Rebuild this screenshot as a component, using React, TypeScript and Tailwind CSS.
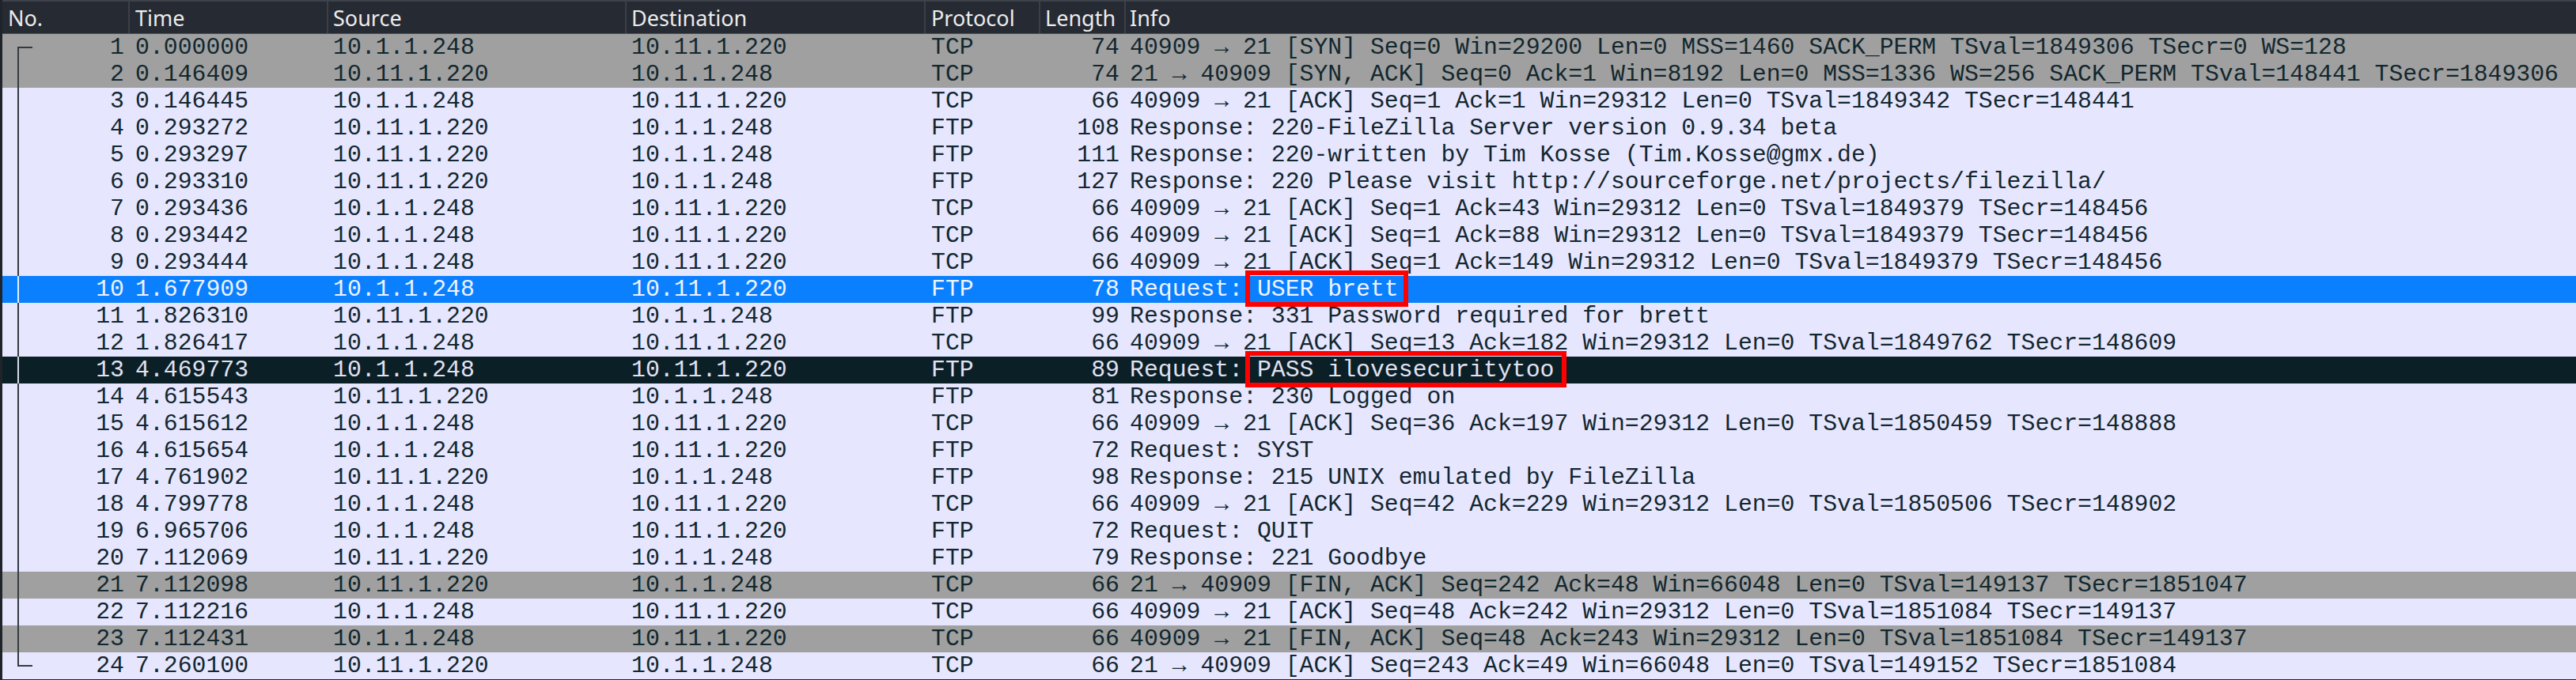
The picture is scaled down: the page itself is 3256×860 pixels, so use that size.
import React from "react";

type RowKind = "normal" | "syn" | "selected" | "marked";

interface Packet {
  no: number;
  time: string;
  src: string;
  dst: string;
  proto: string;
  len: number;
  info: string;
  kind?: RowKind;
  // part of info that gets the red box
  boxed?: string;
}

const A = "10.1.1.248";
const B = "10.11.1.220";

const packets: Packet[] = [
  { no: 1, time: "0.000000", src: A, dst: B, proto: "TCP", len: 74, info: "40909 → 21 [SYN] Seq=0 Win=29200 Len=0 MSS=1460 SACK_PERM TSval=1849306 TSecr=0 WS=128", kind: "syn" },
  { no: 2, time: "0.146409", src: B, dst: A, proto: "TCP", len: 74, info: "21 → 40909 [SYN, ACK] Seq=0 Ack=1 Win=8192 Len=0 MSS=1336 WS=256 SACK_PERM TSval=148441 TSecr=1849306", kind: "syn" },
  { no: 3, time: "0.146445", src: A, dst: B, proto: "TCP", len: 66, info: "40909 → 21 [ACK] Seq=1 Ack=1 Win=29312 Len=0 TSval=1849342 TSecr=148441" },
  { no: 4, time: "0.293272", src: B, dst: A, proto: "FTP", len: 108, info: "Response: 220-FileZilla Server version 0.9.34 beta" },
  { no: 5, time: "0.293297", src: B, dst: A, proto: "FTP", len: 111, info: "Response: 220-written by Tim Kosse (Tim.Kosse@gmx.de)" },
  { no: 6, time: "0.293310", src: B, dst: A, proto: "FTP", len: 127, info: "Response: 220 Please visit http://sourceforge.net/projects/filezilla/" },
  { no: 7, time: "0.293436", src: A, dst: B, proto: "TCP", len: 66, info: "40909 → 21 [ACK] Seq=1 Ack=43 Win=29312 Len=0 TSval=1849379 TSecr=148456" },
  { no: 8, time: "0.293442", src: A, dst: B, proto: "TCP", len: 66, info: "40909 → 21 [ACK] Seq=1 Ack=88 Win=29312 Len=0 TSval=1849379 TSecr=148456" },
  { no: 9, time: "0.293444", src: A, dst: B, proto: "TCP", len: 66, info: "40909 → 21 [ACK] Seq=1 Ack=149 Win=29312 Len=0 TSval=1849379 TSecr=148456" },
  { no: 10, time: "1.677909", src: A, dst: B, proto: "FTP", len: 78, info: "Request: ", boxed: "USER brett", kind: "selected" },
  { no: 11, time: "1.826310", src: B, dst: A, proto: "FTP", len: 99, info: "Response: 331 Password required for brett" },
  { no: 12, time: "1.826417", src: A, dst: B, proto: "TCP", len: 66, info: "40909 → 21 [ACK] Seq=13 Ack=182 Win=29312 Len=0 TSval=1849762 TSecr=148609" },
  { no: 13, time: "4.469773", src: A, dst: B, proto: "FTP", len: 89, info: "Request: ", boxed: "PASS ilovesecuritytoo", kind: "marked" },
  { no: 14, time: "4.615543", src: B, dst: A, proto: "FTP", len: 81, info: "Response: 230 Logged on" },
  { no: 15, time: "4.615612", src: A, dst: B, proto: "TCP", len: 66, info: "40909 → 21 [ACK] Seq=36 Ack=197 Win=29312 Len=0 TSval=1850459 TSecr=148888" },
  { no: 16, time: "4.615654", src: A, dst: B, proto: "FTP", len: 72, info: "Request: SYST" },
  { no: 17, time: "4.761902", src: B, dst: A, proto: "FTP", len: 98, info: "Response: 215 UNIX emulated by FileZilla" },
  { no: 18, time: "4.799778", src: A, dst: B, proto: "TCP", len: 66, info: "40909 → 21 [ACK] Seq=42 Ack=229 Win=29312 Len=0 TSval=1850506 TSecr=148902" },
  { no: 19, time: "6.965706", src: A, dst: B, proto: "FTP", len: 72, info: "Request: QUIT" },
  { no: 20, time: "7.112069", src: B, dst: A, proto: "FTP", len: 79, info: "Response: 221 Goodbye" },
  { no: 21, time: "7.112098", src: B, dst: A, proto: "TCP", len: 66, info: "21 → 40909 [FIN, ACK] Seq=242 Ack=48 Win=66048 Len=0 TSval=149137 TSecr=1851047", kind: "syn" },
  { no: 22, time: "7.112216", src: A, dst: B, proto: "TCP", len: 66, info: "40909 → 21 [ACK] Seq=48 Ack=242 Win=29312 Len=0 TSval=1851084 TSecr=149137" },
  { no: 23, time: "7.112431", src: A, dst: B, proto: "TCP", len: 66, info: "40909 → 21 [FIN, ACK] Seq=48 Ack=243 Win=29312 Len=0 TSval=1851084 TSecr=149137", kind: "syn" },
  { no: 24, time: "7.260100", src: B, dst: A, proto: "TCP", len: 66, info: "21 → 40909 [ACK] Seq=243 Ack=49 Win=66048 Len=0 TSval=149152 TSecr=1851084" },
];

const rowStyles: Record<RowKind, string> = {
  normal: "bg-[#e7e6ff] text-[#12272e]",
  syn: "bg-[#a0a0a0] text-[#12272e]",
  selected: "bg-[#0a80ff] text-[#eef3ff]",
  marked: "bg-[#0b1f27] text-[#e2e2f2]",
};

const lineColor: Record<RowKind, string> = {
  normal: "bg-[#343b40]",
  syn: "bg-[#343b40]",
  selected: "bg-[#e6eeff]",
  marked: "bg-[#d8d8e8]",
};

// conversation bracket drawn in the No. column
const TreeLine: React.FC<{ pos: "first" | "mid" | "last"; kind: RowKind }> = ({ pos, kind }) => {
  const c = lineColor[kind];
  return (
    <>
      {pos === "first" && (
        <>
          <span className={`absolute left-[19px] top-[16px] bottom-0 w-[2px] ${c}`} />
          <span className={`absolute left-[19px] top-[16px] w-[19px] h-[2px] ${c}`} />
        </>
      )}
      {pos === "mid" && <span className={`absolute left-[19px] top-0 bottom-0 w-[2px] ${c}`} />}
      {pos === "last" && (
        <>
          <span className={`absolute left-[19px] top-0 h-[18px] w-[2px] ${c}`} />
          <span className={`absolute left-[19px] top-[16px] w-[19px] h-[2px] ${c}`} />
        </>
      )}
    </>
  );
};

const HeaderCell: React.FC<{ label: string; className: string; first?: boolean }> = ({ label, className, first }) => (
  <div className={`${className} shrink-0 h-full pt-[4px] ${first ? "" : "border-l-2 border-[#3a3f48]"}`}>
    {label}
  </div>
);

const PacketRow: React.FC<{ p: Packet; idx: number; total: number }> = ({ p, idx, total }) => {
  const kind = p.kind ?? "normal";
  const pos = idx === 0 ? "first" : idx === total - 1 ? "last" : "mid";
  return (
    <div className={`flex h-[34px] leading-[34px] whitespace-nowrap ${rowStyles[kind]}`}>
      <div className="relative w-[159px] shrink-0 pr-[5px] text-right">
        <TreeLine pos={pos} kind={kind} />
        {p.no}
      </div>
      <div className="w-[251px] shrink-0 pl-[9px]">{p.time}</div>
      <div className="w-[377px] shrink-0 pl-[8px]">{p.src}</div>
      <div className="w-[378px] shrink-0 pl-[8px]">{p.dst}</div>
      <div className="w-[145px] shrink-0 pl-[9px]">{p.proto}</div>
      <div className="w-[108px] shrink-0 pr-[6px] text-right">{p.len}</div>
      <div className="flex-1 pl-[7px]">
        {p.info}
        {p.boxed && (
          <span className="relative inline-block leading-[34px]">
            {p.boxed}
            <span
              className={`absolute z-10 -left-[15px] -top-[7px] -bottom-[5px] border-[6px] border-[#ff0000] ${
                p.no === 10 ? "-right-[12px]" : "-right-[16px] -top-[6px]"
              }`}
            />
          </span>
        )}
      </div>
    </div>
  );
};

export default function App() {
  return (
    <div className="w-[3256px] h-[860px] overflow-hidden bg-[#1f232a] pl-[3px]">
      <div className="flex h-[43px] items-start border-t-2 border-b border-t-[#3d424b] border-b-[#4a4f58] bg-[#262a33] font-['Noto_Sans',sans-serif] text-[27px] leading-[34px] text-[#ececec]">
        <HeaderCell label="No." className="w-[159px] pl-[7px]" first />
        <HeaderCell label="Time" className="w-[251px] pl-[7px]" />
        <HeaderCell label="Source" className="w-[377px] pl-[6px]" />
        <HeaderCell label="Destination" className="w-[378px] pl-[6px]" />
        <HeaderCell label="Protocol" className="w-[145px] pl-[7px]" />
        <HeaderCell label="Length" className="w-[108px] pl-[6px]" />
        <div className="flex-1 h-full pt-[4px] pl-[5px] border-l-2 border-[#3a3f48]">Info</div>
      </div>
      <div className="font-['Liberation_Mono',monospace] text-[29.8px]">
        {packets.map((p, i) => (
          <PacketRow key={p.no} p={p} idx={i} total={packets.length} />
        ))}
      </div>
    </div>
  );
}
